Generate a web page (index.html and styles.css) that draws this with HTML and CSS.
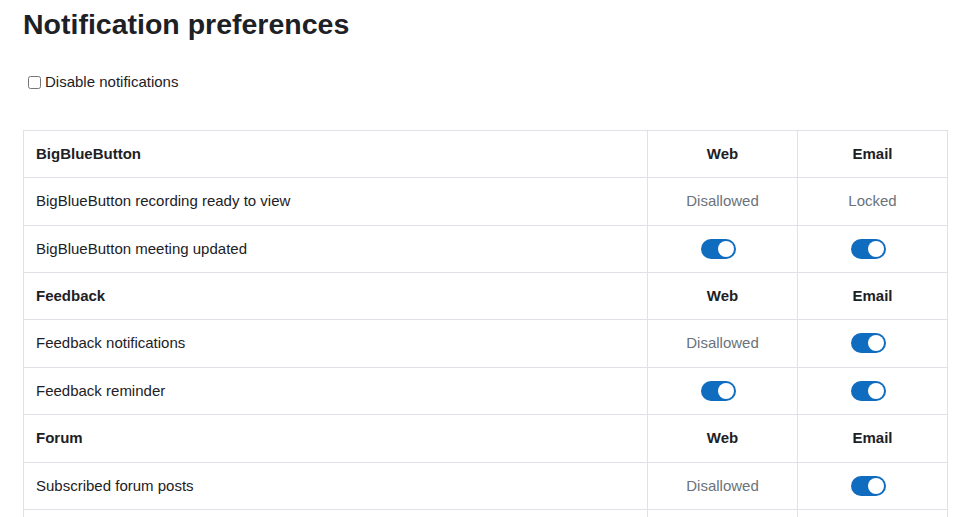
FILE: index.html
```html
<!DOCTYPE html>
<html>
<head>
<meta charset="utf-8">
<link rel="stylesheet" href="styles.css">
</head>
<body>
<div class="page">
  <h2 class="title">Notification preferences</h2>
  <label class="disable">
    <input type="checkbox" class="cb">
    <span>Disable notifications</span>
  </label>
  <table class="prefs">
    <colgroup><col class="c-name"><col class="c-opt"><col class="c-opt"></colgroup>
    <tbody>
      <tr class="head"><th>BigBlueButton</th><th class="center">Web</th><th class="center">Email</th></tr>
      <tr><td>BigBlueButton recording ready to view</td><td class="center muted">Disallowed</td><td class="center muted">Locked</td></tr>
      <tr><td>BigBlueButton meeting updated</td><td class="center"><span class="toggle"></span></td><td class="center"><span class="toggle"></span></td></tr>
      <tr class="head"><th>Feedback</th><th class="center">Web</th><th class="center">Email</th></tr>
      <tr><td>Feedback notifications</td><td class="center muted">Disallowed</td><td class="center"><span class="toggle"></span></td></tr>
      <tr><td>Feedback reminder</td><td class="center"><span class="toggle"></span></td><td class="center"><span class="toggle"></span></td></tr>
      <tr class="head"><th>Forum</th><th class="center">Web</th><th class="center">Email</th></tr>
      <tr><td>Subscribed forum posts</td><td class="center muted">Disallowed</td><td class="center"><span class="toggle"></span></td></tr>
      <tr><td>Subscribed forum digests</td><td class="center muted">Disallowed</td><td class="center"><span class="toggle"></span></td></tr>
    </tbody>
  </table>
</div>
</body>
</html>
```

FILE: styles.css
```css
html, body {
  margin: 0;
  padding: 0;
  background: #fff;
}
body {
  font-family: "Liberation Sans", Arial, sans-serif;
  color: #1d2125;
  font-size: 15px;
  line-height: 1.5;
  overflow: hidden;
}
.page {
  padding: 8px 9px 0 23px;
}
.title {
  margin: 0;
  font-size: 28.5px;
  line-height: 33.75px;
  font-weight: 700;
  color: #1d2125;
}
.disable {
  display: flex;
  align-items: center;
  margin-top: 29px;
  padding-left: 5px;
  height: 22.5px;
}
.cb {
  margin: 0 4px 0 0;
  width: 13px;
  height: 13px;
}
.prefs {
  margin-top: 36.5px;
  width: 924px;
  border-collapse: collapse;
  table-layout: fixed;
}
.c-name { width: 624px; }
.c-opt { width: 150px; }
.prefs th, .prefs td {
  border: 1px solid #dee2e6;
  padding: 12px;
  height: 22.4px;
  text-align: left;
  vertical-align: middle;
  font-size: 15px;
  line-height: 22.4px;
}
.prefs th { font-weight: 700; }
.prefs .center { text-align: center; }
.muted { color: #6a737b; }
.toggle {
  display: inline-block;
  vertical-align: middle;
  position: relative;
  width: 35px;
  height: 20px;
  border-radius: 10px;
  background: #0f6cbf;
  margin-top: -2px;
  margin-right: 8px;
}
.toggle::after {
  content: "";
  position: absolute;
  right: 2px;
  top: 2px;
  width: 16px;
  height: 16px;
  border-radius: 50%;
  background: #fff;
}
```
